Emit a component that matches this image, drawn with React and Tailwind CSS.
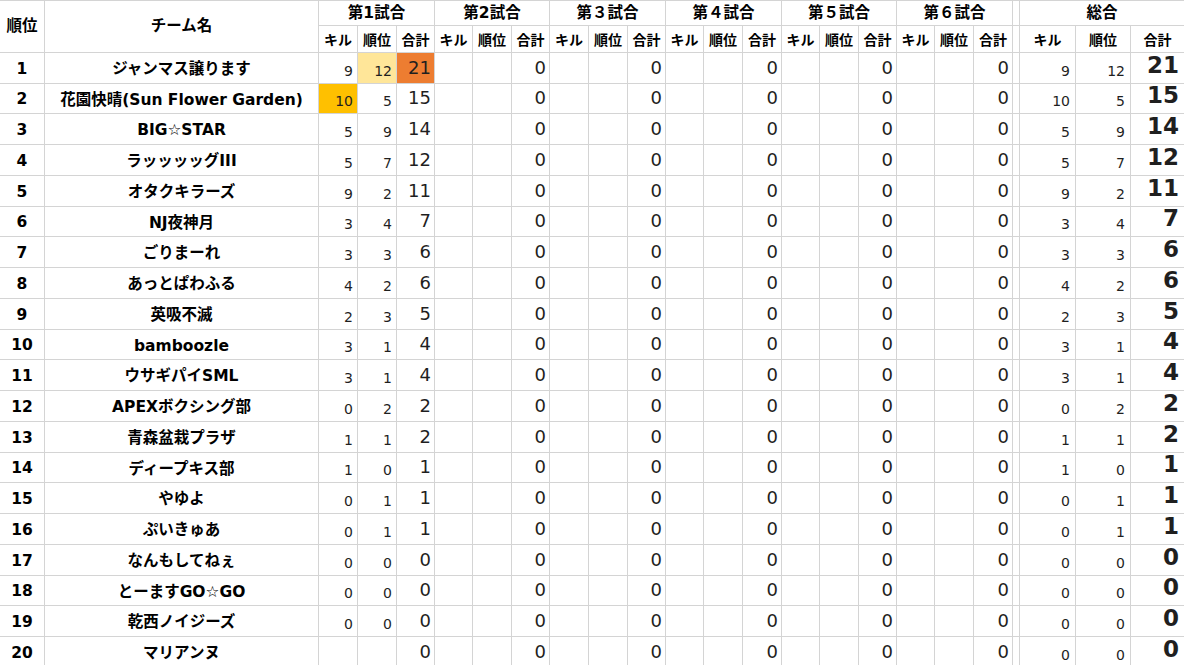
import React from "react";

const teams = [
  ["ジャンマス譲ります", 9, 12, 21],
  ["花園快晴(Sun Flower Garden)", 10, 5, 15],
  ["BIG☆STAR", 5, 9, 14],
  ["ラッッッッグIII", 5, 7, 12],
  ["オタクキラーズ", 9, 2, 11],
  ["NJ夜神月", 3, 4, 7],
  ["ごりまーれ", 3, 3, 6],
  ["あっとぱわふる", 4, 2, 6],
  ["英吸不滅", 2, 3, 5],
  ["bamboozle", 3, 1, 4],
  ["ウサギパイSML", 3, 1, 4],
  ["APEXボクシング部", 0, 2, 2],
  ["青森盆栽プラザ", 1, 1, 2],
  ["ディープキス部", 1, 0, 1],
  ["やゆよ", 0, 1, 1],
  ["ぷいきゅあ", 0, 1, 1],
  ["なんもしてねぇ", 0, 0, 0],
  ["とーますGO☆GO", 0, 0, 0],
  ["乾西ノイジーズ", 0, 0, 0],
  ["マリアンヌ", null, null, 0],
];

const matches = ["第1試合", "第2試合", "第３試合", "第４試合", "第５試合", "第６試合"];

const jp = "font-['DejaVu_Sans','Noto_Sans_CJK_JP',sans-serif]";
const num = "font-['DejaVu_Sans',sans-serif] text-[#1f1f1f]";

// highlighted cells in match 1: [row, col]
const highlight = {
  "0-1": "bg-[#ffe699]",
  "0-2": "bg-[#ed7d31]",
  "1-0": "bg-[#ffc000]",
};

const Small = ({ value, bg = "bg-white", pr = "pr-[4px]" }) => (
  <div className={`flex items-end justify-end ${bg} ${pr} pb-[5px] text-[14px] leading-none ${num}`}>
    {value}
  </div>
);

const Total = ({ value, bg = "bg-white" }) => (
  <div className={`flex items-end justify-end ${bg} pr-[3px] pb-[6px] text-[18px] leading-none ${num}`}>
    {value}
  </div>
);

const SubHead = ({ label }) => (
  <div className={`flex items-center justify-center bg-white pt-[3px] text-[14px] font-bold text-black ${jp}`}>
    {label}
  </div>
);

export default function App() {
  return (
    <div className="h-[665px] w-[1184px] overflow-hidden bg-white">
      <div className="grid grid-cols-[44px_273px_38px_38px_37px_37px_38px_37px_38px_38px_37px_37px_38px_38px_37px_38px_37px_37px_38px_38px_6px_55px_54px_53px] grid-rows-[24px_26px_30px_29px_30px_30px_30px_29px_30px_30px_30px_29px_30px_30px_30px_29px_30px_30px_30px_29px_30px_30px] gap-px bg-[#d4d4d4] pt-px">
        {/* Header row 1 */}
        <div className={`row-span-2 flex items-center justify-center bg-white text-[15.5px] font-bold text-black ${jp}`}>
          順位
        </div>
        <div className={`row-span-2 flex items-center justify-center bg-white text-[15.5px] font-bold text-black ${jp}`}>
          チーム名
        </div>
        {matches.map((m) => (
          <div
            key={m}
            className={`col-span-3 flex items-center justify-center bg-white pt-[2px] text-[15.5px] font-bold text-black ${jp}`}
          >
            {m}
          </div>
        ))}
        <div className="bg-white" />
        <div className={`col-span-3 flex items-center justify-center bg-white pt-[2px] text-[15.5px] font-bold text-black ${jp}`}>
          総合
        </div>

        {/* Header row 2 */}
        {matches.map((m) => (
          <React.Fragment key={m + "-sub"}>
            <SubHead label="キル" />
            <SubHead label="順位" />
            <SubHead label="合計" />
          </React.Fragment>
        ))}
        <div className="bg-white" />
        <SubHead label="キル" />
        <SubHead label="順位" />
        <SubHead label="合計" />

        {/* Data rows */}
        {teams.map(([name, kill, rank, total], i) => (
          <React.Fragment key={name}>
            <div className={`flex items-center justify-center bg-white pt-[3px] text-[15.5px] font-bold text-black ${jp}`}>
              {i + 1}
            </div>
            <div className={`flex items-center justify-center whitespace-nowrap bg-white pt-[4px] text-[15.5px] font-bold text-black ${jp}`}>
              {name}
            </div>

            {/* match 1 */}
            <Small value={kill} bg={highlight[`${i}-0`] || "bg-white"} />
            <Small value={rank} bg={highlight[`${i}-1`] || "bg-white"} />
            <Total value={total} bg={highlight[`${i}-2`] || "bg-white"} />

            {/* matches 2-6 */}
            {[1, 2, 3, 4, 5].map((m) => (
              <React.Fragment key={m}>
                <div className="bg-white" />
                <div className="bg-white" />
                <Total value={0} />
              </React.Fragment>
            ))}

            <div className="bg-white" />

            {/* overall */}
            <Small value={kill ?? 0} pr="pr-[5px]" />
            <Small value={rank ?? 0} pr="pr-[5px]" />
            <div className={`flex items-end justify-end bg-white pr-[5px] pb-[6px] text-[23px] font-bold leading-none ${num}`}>
              {total}
            </div>
          </React.Fragment>
        ))}
      </div>
    </div>
  );
}
